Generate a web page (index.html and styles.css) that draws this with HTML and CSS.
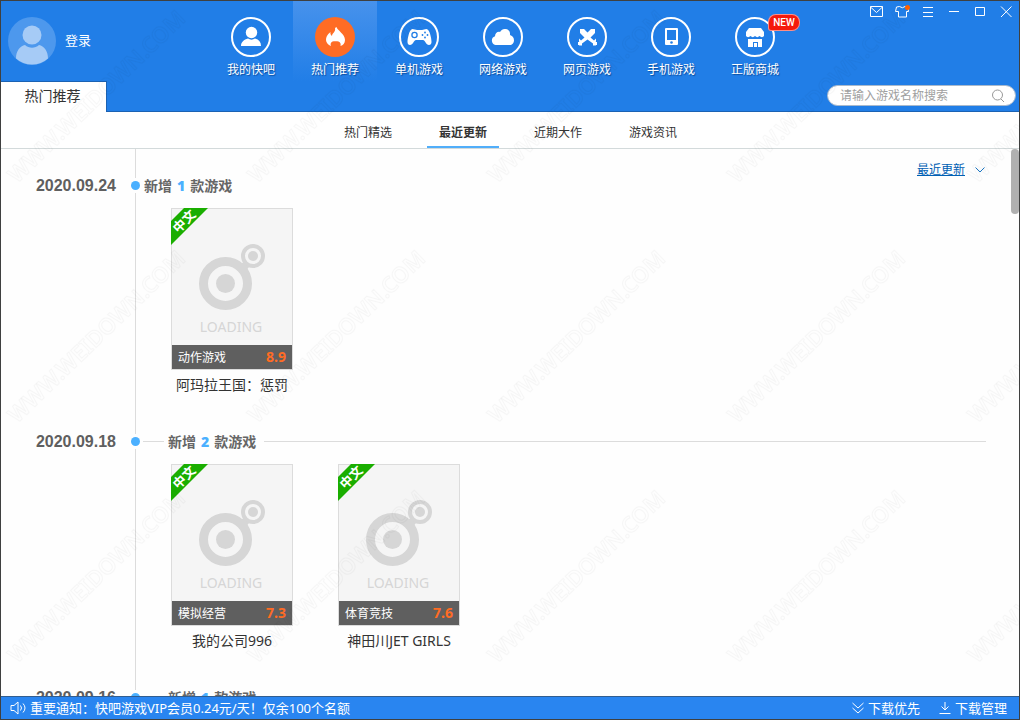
FILE: index.html
```html
<!DOCTYPE html>
<html lang="zh-CN">
<head>
<meta charset="utf-8">
<title>热门推荐</title>
<link rel="stylesheet" href="styles.css">
</head>
<body>
<svg class="defs" aria-hidden="true">
  <symbol id="loading" viewBox="0 0 120 136">
    <path d="M66 57l7-5 4 6-6 7z" fill="#d6d6d6"/>
    <circle cx="53.500" cy="74.500" r="22" fill="none" stroke="#d6d6d6" stroke-width="9"/>
    <circle cx="53.500" cy="74.500" r="9.500" fill="#d6d6d6"/>
    <circle cx="81" cy="47" r="10" fill="#f5f5f5" stroke="#d6d6d6" stroke-width="4"/>
    <circle cx="81" cy="47" r="5" fill="#d6d6d6"/>
  </symbol>
</svg>
<div class="app">
  <header class="header">
    <div class="top">
      <button class="user">
        <svg class="avatar" viewBox="0 0 48 48"><circle cx="24" cy="24" r="24" fill="#4d98ed"/><circle cx="24" cy="18" r="9.500" fill="#a6cbf6"/><path d="M8 41.500C8 34 12 29 17 28c4 3.500 10 3.500 14 0 5 1 9 6 9 13.500A24 24 0 0 1 8 41.500z" fill="#a6cbf6"/></svg>
        <span>登录</span>
      </button>
      <nav class="nav">
        <a class="nav-item" href="#"><svg class="nav-icon" viewBox="0 0 40 40"><circle class="ring" cx="20" cy="20" r="19"/><circle cx="20.500" cy="15.500" r="5.700"/><path d="M10 29c0-4 3-6.500 7-7.500 2 1.500 5 1.500 7 0 4 1 6 3.500 6 7.500z"/></svg><span>我的快吧</span></a>
        <a class="nav-item active" href="#"><svg class="nav-icon" viewBox="0 0 40 40"><circle class="disc" cx="20" cy="20" r="20"/><path d="M21.500 10c.5 3 8.500 7 8.500 13 0 3-2 5.500-4.500 6 .5-2 0-4-2-4.500-1.500-.5-4.500-.5-6 0-1.500.5-2.500 2.500-1.500 4.500-3-1-5-3.500-5-6 0-3 1-5 4.500-8-.5 2 .5 3 1.500 4 0-3 4-4 3-8z"/></svg><span>热门推荐</span></a>
        <a class="nav-item" href="#"><svg class="nav-icon" viewBox="0 0 40 40"><circle class="ring" cx="20" cy="20" r="19"/><path d="M13.500 12c2 0 3 1 4.500 1h5c1.500 0 2.500-1 4.500-1 3 0 5 9 5 13 0 2-1 3-2.500 3-3 0-4-5-6-5h-7c-2 0-3 5-6 5-1.500 0-2.500-1-2.500-3 0-4 2-13 5-13z"/><circle cx="15.500" cy="18" r="2.600" fill="none" stroke="#217ee7" stroke-width="1.300"/><g fill="#217ee7"><circle cx="26" cy="15.500" r=".9"/><circle cx="26" cy="20.500" r=".9"/><circle cx="23.500" cy="18" r=".9"/><circle cx="28.500" cy="18" r=".9"/></g></svg><span>单机游戏</span></a>
        <a class="nav-item" href="#"><svg class="nav-icon" viewBox="0 0 40 40"><circle class="ring" cx="20" cy="20" r="19"/><path d="M12.500 28a4.500 4.500 0 0 1-.5-8.700c0-3 2.500-5 5-4.300 1.500-2.500 3.500-3.500 5.500-3 3 0 5 3 4.500 6 2 .5 4 2.500 4 5.200S29 28 27 28z"/></svg><span>网络游戏</span></a>
        <a class="nav-item" href="#"><svg class="nav-icon" viewBox="0 0 40 40"><circle class="ring" cx="20" cy="20" r="19"/><path d="M13 12h4l3.500 3.500L24 12h4v4l-4.500 4.500 3.500 3 2-2v3l-1 1 1 3h-3v-2l-5.500-4-5.500 4v2h-3l1-3-1-1v-3l2 2 3.500-3L13 16z"/><path d="M11 25h3v3h-3zM27 25h3v3h-3z"/></svg><span>网页游戏</span></a>
        <a class="nav-item" href="#"><svg class="nav-icon" viewBox="0 0 40 40"><circle class="ring" cx="20" cy="20" r="19"/><rect x="14" y="11" width="13" height="17" rx="1"/><path d="M16 13h9v10h-9z" fill="#217ee7"/><circle cx="20.500" cy="25.500" r="1.300" fill="#217ee7"/></svg><span>手机游戏</span></a>
        <a class="nav-item" href="#"><svg class="nav-icon" viewBox="0 0 40 40"><circle class="ring" cx="20" cy="20" r="19"/><path d="M14 11h12l3 4v4c-1 1.500-3 1.500-4.500 0-1.500 1.500-3 1.500-4.500 0-1.500 1.500-3 1.500-4.500 0-1.500 1.500-3.500 1.500-4.500 0v-4z"/><path d="M13 22h14v8h-4v-5h-5v5h-5z"/><path d="M19 26h3v4h-3z"/></svg><span>正版商城</span><em class="badge">NEW</em></a>
      </nav>
      <div class="window-tools">
        <button aria-label="消息"><svg viewBox="0 0 16 16"><path d="M2.500 2.500h12v10h-12zM2.500 3l6 5.500 6-5.500"/></svg></button>
        <button aria-label="换肤"><svg viewBox="0 0 16 16"><path d="M5.500 2.500L2.500 3 1.500 7.500H4.500v5.500h8V7.500h2l-.5-3.500-3-1.500Q8.500 5 5.500 2.500z"/><circle class="dot-orange" cx="13.500" cy="3.500" r="2.500"/></svg></button>
        <button aria-label="菜单"><svg viewBox="0 0 16 16"><path d="M3 3.500h10M3 8.500h10M3 12.500h10"/></svg></button>
        <button aria-label="最小化"><svg viewBox="0 0 16 16"><path d="M3 7.500h10"/></svg></button>
        <button aria-label="最大化"><svg viewBox="0 0 16 16"><path d="M3.500 3.500h9v8h-9z"/></svg></button>
        <button aria-label="关闭"><svg viewBox="0 0 16 16"><path d="M3 2.500l10.500 10.500M13.500 2.500L3 13"/></svg></button>
      </div>
    </div>
    <div class="tabbar">
      <a class="page-tab" href="#">热门推荐</a>
      <form class="search">
        <input type="text" aria-label="搜索游戏" placeholder="请输入游戏名称搜索">
        <button type="button" aria-label="搜索"><svg viewBox="0 0 14 14"><circle cx="6.500" cy="6" r="5"/><path d="M10 10l3 3"/></svg></button>
      </form>
    </div>
  </header>

  <nav class="subnav">
    <a href="#">热门精选</a>
    <a href="#" class="current">最近更新</a>
    <a href="#">近期大作</a>
    <a href="#">游戏资讯</a>
  </nav>

  <main class="content">
    <div class="sort"><a href="#">最近更新</a><svg viewBox="0 0 10 6"><path d="M.5.500l4.500 4.500 4.500-4.500"/></svg></div>
    <div class="scroll-thumb"></div>

    <div class="day lead"><div class="rail"><i class="line"></i></div></div>

    <section class="day">
      <time class="date">2020.09.24</time>
      <div class="rail"><i class="dot"></i><i class="line"></i></div>
      <div class="day-body">
        <h2 class="day-title">新增<b>1</b>款游戏</h2>
        <div class="cards">
          <article class="card">
            <div class="cover">
              <svg class="placeholder"><use href="#loading"/></svg>
              <span class="loading">LOADING</span>
              <div class="ribbon"><span>中文</span></div>
              <div class="bar"><span>动作游戏</span><b>8.9</b></div>
            </div>
            <h3>阿玛拉王国：惩罚</h3>
          </article>
        </div>
      </div>
    </section>

    <section class="day">
      <time class="date">2020.09.18</time>
      <div class="rail"><i class="dot"></i><i class="line"></i></div>
      <div class="day-body">
        <h2 class="day-title ruled">新增<b>2</b>款游戏</h2>
        <div class="cards">
          <article class="card">
            <div class="cover">
              <svg class="placeholder"><use href="#loading"/></svg>
              <span class="loading">LOADING</span>
              <div class="ribbon"><span>中文</span></div>
              <div class="bar"><span>模拟经营</span><b>7.3</b></div>
            </div>
            <h3>我的公司996</h3>
          </article>
          <article class="card">
            <div class="cover">
              <svg class="placeholder"><use href="#loading"/></svg>
              <span class="loading">LOADING</span>
              <div class="ribbon"><span>中文</span></div>
              <div class="bar"><span>体育竞技</span><b>7.6</b></div>
            </div>
            <h3>神田川JET GIRLS</h3>
          </article>
        </div>
      </div>
    </section>

    <section class="day">
      <time class="date">2020.09.16</time>
      <div class="rail"><i class="dot"></i><i class="line"></i></div>
      <div class="day-body">
        <h2 class="day-title ruled">新增<b>1</b>款游戏</h2>
      </div>
    </section>
  </main>

  <footer class="footer">
    <svg class="speaker" viewBox="0 0 16 14"><path d="M1 4.500h3l4-3.500v12L4 9.500H1zM10.500 4.500q2 2.500 0 5M13 2.500q4 4.500 0 9"/></svg>
    <span class="notice">重要通知：快吧游戏VIP会员0.24元/天！仅余100个名额</span>
    <button><svg viewBox="0 0 12 12"><path d="M.5 1l5.500 5 5.500-5M.5 6l5.500 5 5.500-5"/></svg>下载优先</button>
    <button><svg viewBox="0 0 12 12"><path d="M6 0v8M2.500 4.500L6 8l3.500-3.500M.5 11.500h11"/></svg>下载管理</button>
  </footer>
</div>
<svg class="watermark" aria-hidden="true">
  <defs>
    <pattern id="wm" width="240" height="240" patternUnits="userSpaceOnUse">
      <text class="wm-text" transform="translate(17 184) rotate(-44)">WWW.WEIDOWN.COM</text>
    </pattern>
  </defs>
  <rect width="100%" height="100%" fill="url(#wm)"/>
</svg>
</body>
</html>
```
FILE: styles.css
```css
* { box-sizing: border-box; }

body {
  margin: 0;
  font: 12px/16px "Noto Sans", "Noto Sans CJK SC", sans-serif;
  color: #333;
}

a { color: inherit; text-decoration: none; }

button {
  margin: 0;
  padding: 0;
  border: 0;
  background: none;
  font: inherit;
  color: inherit;
  cursor: pointer;
}

h2, h3 { margin: 0; }

.defs { position: absolute; width: 0; height: 0; }

.app {
  display: flex;
  flex-direction: column;
  height: 100vh;
  border: 1px solid #3f4040;
  background: #fefefe;
}

/* header */
.header {
  flex: none;
  background: #217ee7;
  border-bottom: 1px solid #1b62b3;
  color: #fff;
}

.top { display: flex; height: 80px; }

.user {
  display: flex;
  align-items: center;
  align-self: center;
  gap: 9px;
  width: 208px;
  padding-left: 7px;
  font-size: 13px;
}

.user span { padding-bottom: 2px; }

.avatar { width: 48px; height: 48px; }

.nav { display: flex; }

.nav-item {
  position: relative;
  display: flex;
  flex-direction: column;
  align-items: center;
  gap: 5px;
  width: 84px;
  padding-top: 16px;
  text-shadow: 1px 1px 1px #0d4d9c;
}

.nav-item.active { background: linear-gradient(#4792ec, #217ee7); }

.nav-icon { width: 40px; height: 40px; fill: #fff; }
.nav-icon .ring { fill: none; stroke: #fff; stroke-width: 2; }
.nav-icon .disc { fill: #ff6c24; }

.badge {
  position: absolute;
  top: 14px;
  left: 56px;
  width: 30px;
  border-radius: 7px 7px 7px 2px;
  background: #f51a0c;
  box-shadow: 0 0 0 1px #ff8d85;
  font: 500 10px/15px Roboto, sans-serif;
  text-align: center;
  text-shadow: none;
}

.window-tools {
  display: flex;
  height: 22px;
  margin-left: auto;
}

.window-tools button {
  display: flex;
  align-items: center;
  justify-content: center;
  width: 26px;
}

.window-tools svg { width: 16px; height: 16px; fill: none; stroke: #fff; stroke-width: 1; }
.window-tools .dot-orange { fill: #ff6000; stroke: none; }

.tabbar {
  display: flex;
  justify-content: space-between;
  height: 30px;
}

.page-tab {
  width: 106px;
  margin-bottom: -1px;
  padding-right: 2px;
  border: solid #1b62b3;
  border-width: 1px 1px 0 0;
  background: #fff;
  color: #333;
  font-size: 14px;
  line-height: 28px;
  text-align: center;
}

.search {
  display: flex;
  align-items: center;
  width: 189px;
  height: 21px;
  margin: 4px 3px 0 0;
  padding: 0 10px 0 12px;
  border: 1px solid #a9b9cc;
  border-radius: 11px;
  background: #fff;
}

.search input {
  flex: 1;
  min-width: 0;
  padding: 0;
  border: 0;
  outline: 0;
  background: none;
  font: inherit;
}

.search input::placeholder { color: #a0a0a0; }
.search button { display: flex; }
.search svg { width: 14px; height: 14px; fill: none; stroke: #999; }

/* sub navigation */
.subnav {
  display: flex;
  flex: none;
  justify-content: center;
  gap: 23px;
  height: 37px;
  padding-left: 1px;
  border-bottom: 1px solid #d3dadb;
  background: #fff;
  line-height: 42px;
}

.subnav a { height: 36px; padding: 0 12px; }

.subnav .current {
  border-bottom: 2px solid #51aefa;
  font-weight: bold;
}

/* timeline */
.content {
  position: relative;
  flex: 1;
  min-height: 0;
  overflow: hidden;
}

.sort {
  position: absolute;
  top: 13px;
  right: 34px;
  display: flex;
  align-items: center;
  gap: 10px;
  color: #0060b4;
}

.sort a { text-decoration: underline; }
.sort svg { width: 10px; height: 6px; fill: none; stroke: #1b78c8; }

.scroll-thumb {
  position: absolute;
  top: 0;
  right: 0;
  width: 8px;
  height: 65px;
  border-radius: 4px;
  background: #b0b0b0;
}

.day {
  display: grid;
  grid-template-columns: 115px 11px 1fr;
  column-gap: 14px;
  margin-right: 33px;
}

.lead { height: 29px; }
.lead .rail { grid-column: 2; }

.date {
  font: bold 16px/15px "Liberation Sans", sans-serif;
  color: #5f5f5f;
  text-align: right;
}

.rail { display: flex; flex-direction: column; align-items: center; }

.dot {
  width: 9px;
  height: 9px;
  margin: 3px 0;
  border-radius: 50%;
  background: #4bb0ff;
}

.line { flex: 1; width: 1px; background: #dcdcdc; }

.day-body { margin-left: -12px; }

.day-title {
  display: flex;
  align-items: center;
  padding-left: 1px;
  font-size: 14px;
  line-height: 15px;
  color: #666;
}

.day-title b { margin: 0 5px; color: #4bb0ff; }

.day-title.ruled { padding-left: 0; }

.day-title.ruled::before,
.day-title.ruled::after {
  content: "";
  height: 1px;
  background: #dcdcdc;
}

.day-title.ruled::before { width: 21px; margin-right: 4px; }
.day-title.ruled::after { flex: 1; margin-left: 8px; }

.cards {
  display: flex;
  gap: 45px;
  padding: 15px 0 38px 28px;
}

.card { width: 122px; }

.cover {
  position: relative;
  display: flex;
  flex-direction: column;
  justify-content: flex-end;
  height: 162px;
  border: 1px solid #dcdcdc;
  background: #f5f5f5;
}

.placeholder {
  position: absolute;
  top: 0;
  left: 0;
  width: 120px;
  height: 136px;
}

.loading {
  margin-bottom: 8px;
  padding-right: 2px;
  color: #d6d6d6;
  font-size: 14px;
  line-height: 20px;
  text-align: center;
}

.ribbon {
  position: absolute;
  top: -1px;
  left: -1px;
  width: 37px;
  height: 37px;
  background: #1aae00;
  clip-path: polygon(13px 0, 100% 0, 0 100%, 0 13px);
  color: #fff;
  font-weight: bold;
  font-size: 13px;
}

.ribbon span {
  position: absolute;
  top: 5px;
  left: 0;
  width: 26px;
  transform: rotate(-45deg);
}

.bar {
  display: flex;
  justify-content: space-between;
  height: 24px;
  padding: 0 6px;
  background: #5f5f5f;
  color: #fff;
  line-height: 26px;
}

.bar b { color: #ff6c24; font-size: 14px; line-height: 24px; }

.card h3 {
  margin: 4px -10px 0;
  font-weight: normal;
  font-size: 14px;
  line-height: 22px;
  text-align: center;
}

/* status bar */
.footer {
  display: flex;
  flex: none;
  align-items: center;
  height: 23px;
  padding: 0 12px 0 9px;
  border-top: 1px solid #315d8f;
  background: #2985f0;
  color: #fff;
  font-size: 13px;
  line-height: 22px;
}

.footer svg { width: 12px; height: 12px; fill: none; stroke: #fff; }
.footer .speaker { width: 16px; height: 14px; margin-right: 4px; }
.notice { flex: 1; }

.footer button {
  display: flex;
  align-items: center;
  gap: 4px;
  margin-left: 19px;
}

/* site mark */
.watermark {
  position: fixed;
  inset: 0;
  width: 100%;
  height: 100%;
  pointer-events: none;
}

.wm-text {
  font: 600 22px "Noto Sans", sans-serif;
  fill: none;
  stroke: #000;
  stroke-opacity: .03;
  stroke-width: 1;
}
```
